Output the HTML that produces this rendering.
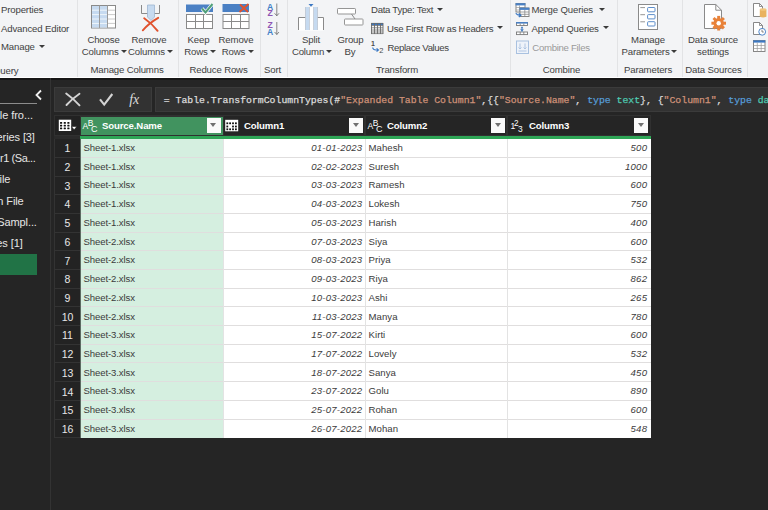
<!DOCTYPE html>
<html><head><meta charset="utf-8"><style>
html,body{margin:0;padding:0;}
body{width:768px;height:510px;overflow:hidden;position:relative;background:#252525;font-family:"Liberation Sans", sans-serif;}
.t{position:absolute;white-space:nowrap;}
</style></head><body>
<div style="position:absolute;left:0px;top:0px;width:768px;height:77px;background:#f3f4f6;"></div><div style="position:absolute;left:0px;top:77px;width:768px;height:1px;background:#ffffff;"></div><div style="position:absolute;left:0px;top:78px;width:768px;height:2px;background:#161616;"></div><div style="position:absolute;left:77px;top:0px;width:1px;height:77px;background:#e2e3e5;"></div><div style="position:absolute;left:178px;top:0px;width:1px;height:77px;background:#e2e3e5;"></div><div style="position:absolute;left:260px;top:0px;width:1px;height:77px;background:#e2e3e5;"></div><div style="position:absolute;left:287px;top:0px;width:1px;height:77px;background:#e2e3e5;"></div><div style="position:absolute;left:510px;top:0px;width:1px;height:77px;background:#e2e3e5;"></div><div style="position:absolute;left:617px;top:0px;width:1px;height:77px;background:#e2e3e5;"></div><div style="position:absolute;left:682px;top:0px;width:1px;height:77px;background:#e2e3e5;"></div><div style="position:absolute;left:747px;top:0px;width:1px;height:77px;background:#e2e3e5;"></div><div class="t" style="left:1px;top:3.03px;font-size:9.6px;line-height:14px;color:#424242;letter-spacing:-0.15px;">Properties</div><div class="t" style="left:1px;top:21.83px;font-size:9.6px;line-height:14px;color:#424242;letter-spacing:-0.15px;">Advanced Editor</div><div class="t" style="left:1px;top:40.43px;font-size:9.6px;line-height:14px;color:#424242;letter-spacing:-0.15px;">Manage</div><div style="position:absolute;left:39px;top:45px;width:0;height:0;border-left:3px solid transparent;border-right:3px solid transparent;border-top:3.2px solid #3b3b3b"></div><div class="t" style="left:-7px;top:63.63px;font-size:9.6px;line-height:14px;color:#424242;letter-spacing:-0.15px;">Query</div><div class="t" style="left:3.5px;width:200px;text-align:center;top:33.33px;font-size:9.6px;line-height:14px;color:#424242;letter-spacing:-0.15px;">Choose</div><div class="t" style="left:0.20000000000000284px;width:200px;text-align:center;top:45.33px;font-size:9.6px;line-height:14px;color:#424242;letter-spacing:-0.15px;">Columns</div><div style="position:absolute;left:121px;top:49.8px;width:0;height:0;border-left:3px solid transparent;border-right:3px solid transparent;border-top:3.2px solid #3b3b3b"></div><div class="t" style="left:49px;width:200px;text-align:center;top:33.33px;font-size:9.6px;line-height:14px;color:#424242;letter-spacing:-0.15px;">Remove</div><div class="t" style="left:46.5px;width:200px;text-align:center;top:45.33px;font-size:9.6px;line-height:14px;color:#424242;letter-spacing:-0.15px;">Columns</div><div style="position:absolute;left:167px;top:49.8px;width:0;height:0;border-left:3px solid transparent;border-right:3px solid transparent;border-top:3.2px solid #3b3b3b"></div><div class="t" style="left:27px;width:200px;text-align:center;top:63.33px;font-size:9.6px;line-height:14px;color:#424242;letter-spacing:-0.15px;">Manage Columns</div><div class="t" style="left:98.5px;width:200px;text-align:center;top:33.33px;font-size:9.6px;line-height:14px;color:#424242;letter-spacing:-0.15px;">Keep</div><div class="t" style="left:96px;width:200px;text-align:center;top:45.33px;font-size:9.6px;line-height:14px;color:#424242;letter-spacing:-0.15px;">Rows</div><div style="position:absolute;left:209.5px;top:49.8px;width:0;height:0;border-left:3px solid transparent;border-right:3px solid transparent;border-top:3.2px solid #3b3b3b"></div><div class="t" style="left:136px;width:200px;text-align:center;top:33.33px;font-size:9.6px;line-height:14px;color:#424242;letter-spacing:-0.15px;">Remove</div><div class="t" style="left:133.5px;width:200px;text-align:center;top:45.33px;font-size:9.6px;line-height:14px;color:#424242;letter-spacing:-0.15px;">Rows</div><div style="position:absolute;left:247.5px;top:49.8px;width:0;height:0;border-left:3px solid transparent;border-right:3px solid transparent;border-top:3.2px solid #3b3b3b"></div><div class="t" style="left:118.5px;width:200px;text-align:center;top:63.33px;font-size:9.6px;line-height:14px;color:#424242;letter-spacing:-0.15px;">Reduce Rows</div><div class="t" style="left:172.5px;width:200px;text-align:center;top:63.33px;font-size:9.6px;line-height:14px;color:#424242;letter-spacing:-0.15px;">Sort</div><div class="t" style="left:211px;width:200px;text-align:center;top:33.33px;font-size:9.6px;line-height:14px;color:#424242;letter-spacing:-0.15px;">Split</div><div class="t" style="left:208px;width:200px;text-align:center;top:45.33px;font-size:9.6px;line-height:14px;color:#424242;letter-spacing:-0.15px;">Column</div><div style="position:absolute;left:326px;top:49.8px;width:0;height:0;border-left:3px solid transparent;border-right:3px solid transparent;border-top:3.2px solid #3b3b3b"></div><div class="t" style="left:250.5px;width:200px;text-align:center;top:33.33px;font-size:9.6px;line-height:14px;color:#424242;letter-spacing:-0.15px;">Group</div><div class="t" style="left:250px;width:200px;text-align:center;top:45.33px;font-size:9.6px;line-height:14px;color:#424242;letter-spacing:-0.15px;">By</div><div class="t" style="left:371px;top:3.33px;font-size:9.6px;line-height:14px;color:#424242;letter-spacing:-0.28px;">Data Type: Text</div><div style="position:absolute;left:437px;top:7.8px;width:0;height:0;border-left:3px solid transparent;border-right:3px solid transparent;border-top:3.2px solid #3b3b3b"></div><div class="t" style="left:387px;top:21.63px;font-size:9.6px;line-height:14px;color:#424242;letter-spacing:-0.24px;">Use First Row as Headers</div><div style="position:absolute;left:497px;top:26px;width:0;height:0;border-left:3px solid transparent;border-right:3px solid transparent;border-top:3.2px solid #3b3b3b"></div><div class="t" style="left:387.5px;top:40.83px;font-size:9.6px;line-height:14px;color:#424242;letter-spacing:-0.38px;">Replace Values</div><div class="t" style="left:297px;width:200px;text-align:center;top:63.33px;font-size:9.6px;line-height:14px;color:#424242;letter-spacing:-0.15px;">Transform</div><div class="t" style="left:531.5px;top:3.23px;font-size:9.6px;line-height:14px;color:#424242;letter-spacing:-0.15px;">Merge Queries</div><div style="position:absolute;left:599px;top:7.8px;width:0;height:0;border-left:3px solid transparent;border-right:3px solid transparent;border-top:3.2px solid #3b3b3b"></div><div class="t" style="left:531.5px;top:21.63px;font-size:9.6px;line-height:14px;color:#424242;letter-spacing:-0.15px;">Append Queries</div><div style="position:absolute;left:603px;top:26px;width:0;height:0;border-left:3px solid transparent;border-right:3px solid transparent;border-top:3.2px solid #3b3b3b"></div><div class="t" style="left:532.3px;top:40.83px;font-size:9.6px;line-height:14px;color:#9a9a9a;letter-spacing:-0.3px;">Combine Files</div><div class="t" style="left:461.5px;width:200px;text-align:center;top:63.33px;font-size:9.6px;line-height:14px;color:#424242;letter-spacing:-0.15px;">Combine</div><div class="t" style="left:548px;width:200px;text-align:center;top:33.33px;font-size:9.6px;line-height:14px;color:#424242;letter-spacing:-0.15px;">Manage</div><div class="t" style="left:545.5px;width:200px;text-align:center;top:45.33px;font-size:9.6px;line-height:14px;color:#424242;letter-spacing:-0.15px;">Parameters</div><div style="position:absolute;left:671px;top:49.8px;width:0;height:0;border-left:3px solid transparent;border-right:3px solid transparent;border-top:3.2px solid #3b3b3b"></div><div class="t" style="left:548px;width:200px;text-align:center;top:63.33px;font-size:9.6px;line-height:14px;color:#424242;letter-spacing:-0.15px;">Parameters</div><div class="t" style="left:613px;width:200px;text-align:center;top:33.33px;font-size:9.6px;line-height:14px;color:#424242;letter-spacing:-0.15px;">Data source</div><div class="t" style="left:613px;width:200px;text-align:center;top:45.33px;font-size:9.6px;line-height:14px;color:#424242;letter-spacing:-0.15px;">settings</div><div class="t" style="left:613.5px;width:200px;text-align:center;top:63.33px;font-size:9.6px;line-height:14px;color:#424242;letter-spacing:-0.15px;">Data Sources</div><svg style="position:absolute;left:0;top:0" width="768" height="78"><rect x="91.5" y="5.5" width="24" height="22.5" fill="#fff" stroke="#8a8a8a"/><rect x="92" y="6" width="15.5" height="21.5" fill="#c6daf0"/><line x1="92" x2="107.5" y1="10.2" y2="10.2" stroke="#f4f8fc" stroke-width="0.9"/><line x1="107.5" x2="115" y1="10.2" y2="10.2" stroke="#c4c4c4" stroke-width="0.9"/><line x1="92" x2="107.5" y1="14.6" y2="14.6" stroke="#f4f8fc" stroke-width="0.9"/><line x1="107.5" x2="115" y1="14.6" y2="14.6" stroke="#c4c4c4" stroke-width="0.9"/><line x1="92" x2="107.5" y1="19" y2="19" stroke="#f4f8fc" stroke-width="0.9"/><line x1="107.5" x2="115" y1="19" y2="19" stroke="#c4c4c4" stroke-width="0.9"/><line x1="92" x2="107.5" y1="23.4" y2="23.4" stroke="#f4f8fc" stroke-width="0.9"/><line x1="107.5" x2="115" y1="23.4" y2="23.4" stroke="#c4c4c4" stroke-width="0.9"/><line x1="99.5" x2="99.5" y1="5.5" y2="28" stroke="#9a9a9a" stroke-width="1"/><line x1="107.5" x2="107.5" y1="5.5" y2="28" stroke="#9a9a9a" stroke-width="1"/><path d="M141.5 5 V13.5 H159.5 V5" fill="none" stroke="#8a8a8a"/><path d="M147.5 5 H154.5 V17 L151 20.5 L147.5 17 Z" fill="#c6daf0" stroke="#9db5d0" stroke-width="0.8"/><path d="M142.8 30.3 Q149 23 158.2 17.8 M144.2 18.2 Q152 23.5 157.6 30.8" fill="none" stroke="#e0522e" stroke-width="1.9" stroke-linecap="round"/><rect x="186" y="4.5" width="27" height="7.5" fill="#4a80c4"/><rect x="186.5" y="14.5" width="26" height="14" fill="#fff" stroke="#8a8a8a"/><line x1="186.5" x2="212.5" y1="21.5" y2="21.5" stroke="#8a8a8a"/><line x1="195.5" x2="195.5" y1="14.5" y2="28.5" stroke="#8a8a8a"/><line x1="203.5" x2="203.5" y1="14.5" y2="28.5" stroke="#8a8a8a"/><path d="M202 8.5 L205.5 12.5 L212.5 4" fill="none" stroke="#ffffff" stroke-width="3.5"/><path d="M202 8.5 L205.5 12.5 L212.5 4" fill="none" stroke="#4f9f7a" stroke-width="2"/><rect x="222.5" y="4" width="26.5" height="8" fill="#4a80c4"/><rect x="223" y="14.5" width="26" height="14" fill="#fff" stroke="#8a8a8a"/><line x1="223" x2="249" y1="21.5" y2="21.5" stroke="#8a8a8a"/><line x1="231.5" x2="231.5" y1="14.5" y2="28.5" stroke="#8a8a8a"/><line x1="240.5" x2="240.5" y1="14.5" y2="28.5" stroke="#8a8a8a"/><path d="M239.5 12 L248.5 4 M240 4.5 L248 12" fill="none" stroke="#e0522e" stroke-width="1.8"/><text x="267" y="9.8" font-family="Liberation Sans" font-size="8.6" font-weight="bold" fill="#3f7fc7">A</text><text x="267.5" y="16.4" font-family="Liberation Sans" font-size="8.6" font-weight="bold" fill="#8e54b4">Z</text><text x="267.5" y="28.2" font-family="Liberation Sans" font-size="8.6" font-weight="bold" fill="#8e54b4">Z</text><text x="267" y="34.9" font-family="Liberation Sans" font-size="8.6" font-weight="bold" fill="#3f7fc7">A</text><path d="M276.8 3.5 V15.8 M274.6 13.3 L276.8 15.8 L279 13.3" fill="none" stroke="#6a6a6a" stroke-width="0.8"/><path d="M276.8 22 V34.5 M274.6 32 L276.8 34.5 L279 32" fill="none" stroke="#6a6a6a" stroke-width="0.8"/><rect x="298.5" y="17.5" width="25" height="13" fill="#fff"/><path d="M298.5 30 V17.5 H305.5 M317.5 17.5 H323.5 V30" fill="none" stroke="#8a8a8a"/><rect x="305.5" y="7" width="4" height="23" fill="#c6daf0"/><rect x="313.5" y="7" width="4" height="23" fill="#c6daf0"/><rect x="309.5" y="7" width="4" height="23" fill="#fff"/><path d="M305.5 7 V30 M309.5 7 V30 M313.5 7 V30 M317.5 7 V30" stroke="#b0b8c4" stroke-width="0.6"/><path d="M308.5 4 H313.5 L311 6.8 Z" fill="#3b78c3"/><rect x="337.5" y="8.5" width="18" height="5.5" rx="0.7" fill="#fff" stroke="#959595"/><rect x="344.5" y="19" width="18.5" height="6" rx="0.7" fill="#fff" stroke="#959595"/><line x1="351.5" y1="14" x2="355" y2="19" stroke="#8a8a8a"/><rect x="371" y="23" width="12" height="11" fill="#fff"/><rect x="371" y="23" width="12" height="2.2" fill="#3b78c3"/><path d="M371.5 23 V34 M374.5 23 V34 M377.5 23 V34 M380.5 23 V34 M383 23 V34" stroke="#6a6a6a" stroke-width="0.9"/><path d="M371 23.4 H383 M371 25.6 H383 M371 27.8 H383 M371 30 H383 M371 32 H383 M371 33.6 H383" stroke="#6a6a6a" stroke-width="0.8"/><text x="371" y="46.3" font-family="Liberation Sans" font-size="7" font-weight="bold" fill="#4a4a4a">1</text><text x="379.3" y="53.2" font-family="Liberation Sans" font-size="7.5" fill="#4a4a4a">2</text><path d="M372.6 47.5 Q373 50 376 50 H378.3 M376.6 48.3 L378.5 50 L376.6 51.7" fill="none" stroke="#3b78c3" stroke-width="1.1"/><rect x="516" y="3.5" width="9" height="8.5" fill="#fff" stroke="#7a7a7a" stroke-width="0.9"/><rect x="515.6" y="3.2" width="9.8" height="2.2" fill="#4a80c4"/><path d="M516 7.5 H525 M516 10 H525 M519.5 5.4 V12" stroke="#9a9a9a" stroke-width="0.7"/><rect x="520" y="8" width="9" height="8.5" fill="#fff" stroke="#7a7a7a" stroke-width="0.9"/><rect x="519.6" y="7.7" width="9.8" height="2.2" fill="#4a80c4"/><path d="M520 12 H529 M520 14.3 H529 M524.8 9.9 V16.5" stroke="#8a8a8a" stroke-width="0.8"/><path d="M515.8 13.2 Q517 15.3 520.2 15.3 M518.8 13.6 L520.8 15.3 L518.8 17" fill="none" stroke="#3b78c3" stroke-width="1.3"/><rect x="516.5" y="22.5" width="11" height="3" fill="#fff" stroke="#7a7a7a" stroke-width="0.9"/><rect x="516.1" y="22" width="11.8" height="1.6" fill="#4a80c4"/><path d="M520.2 23.5 V25.5 M523.8 23.5 V25.5" stroke="#7a7a7a" stroke-width="0.8"/><rect x="516.5" y="32" width="11" height="2.6" fill="#fff" stroke="#7a7a7a" stroke-width="0.9"/><path d="M520.2 32 V34.6 M523.8 32 V34.6" stroke="#7a7a7a" stroke-width="0.8"/><path d="M522 27 V31.5" stroke="#4a80c4" stroke-width="1"/><path d="M520.2 29.3 L523.8 29.3 L522 31.8 Z M520.6 28.2 L523.4 28.2 L522 26.2 Z" fill="#4a80c4"/><rect x="516.5" y="41" width="12" height="12.5" fill="#eef3fa" stroke="#a9c1e0"/><path d="M520 43.5 V49 M518.5 47.5 L520 49 L521.5 47.5 M525 43.5 V49 M523.5 47.5 L525 49 L526.5 47.5 M518.5 51 H526.5" fill="none" stroke="#a9c1e0" stroke-width="0.9"/><rect x="638.5" y="4.5" width="19" height="25" fill="#fff" stroke="#8a8a8a"/><line x1="640.3" x2="645" y1="7.6000000000000005" y2="7.6000000000000005" stroke="#8a8a8a" stroke-width="0.9"/><rect x="647.6" y="7.5" width="7.4" height="4.3" rx="0.8" fill="#fff" stroke="#4a80c4" stroke-width="0.9"/><line x1="640.3" x2="645" y1="14.700000000000001" y2="14.700000000000001" stroke="#8a8a8a" stroke-width="0.9"/><rect x="647.6" y="14.600000000000001" width="7.4" height="4.3" rx="0.8" fill="#fff" stroke="#4a80c4" stroke-width="0.9"/><line x1="640.3" x2="645" y1="21.799999999999997" y2="21.799999999999997" stroke="#8a8a8a" stroke-width="0.9"/><rect x="647.6" y="21.7" width="7.4" height="4.3" rx="0.8" fill="#fff" stroke="#4a80c4" stroke-width="0.9"/><path d="M704.5 4.5 H715.8 L721.5 10.2 V28.5 H704.5 Z" fill="#fff" stroke="#8a8a8a"/><path d="M715.8 4.5 V10.2 H721.5" fill="none" stroke="#8a8a8a"/><g fill="#e8823a"><circle cx="718.7" cy="23.2" r="5.2"/><rect x="717.2" y="15.899999999999999" width="3" height="3.5" transform="rotate(0 718.7 23.2)"/><rect x="717.2" y="15.899999999999999" width="3" height="3.5" transform="rotate(45 718.7 23.2)"/><rect x="717.2" y="15.899999999999999" width="3" height="3.5" transform="rotate(90 718.7 23.2)"/><rect x="717.2" y="15.899999999999999" width="3" height="3.5" transform="rotate(135 718.7 23.2)"/><rect x="717.2" y="15.899999999999999" width="3" height="3.5" transform="rotate(180 718.7 23.2)"/><rect x="717.2" y="15.899999999999999" width="3" height="3.5" transform="rotate(225 718.7 23.2)"/><rect x="717.2" y="15.899999999999999" width="3" height="3.5" transform="rotate(270 718.7 23.2)"/><rect x="717.2" y="15.899999999999999" width="3" height="3.5" transform="rotate(315 718.7 23.2)"/></g><circle cx="718.7" cy="23.2" r="2.2" fill="#fff"/><path d="M753.5 3.5 H759.5 L762.5 6.5 V16.5 H753.5 Z" fill="#fff" stroke="#7a7a7a" stroke-width="0.9"/><path d="M759.5 3.5 V6.5 H762.5" fill="none" stroke="#7a7a7a" stroke-width="0.8"/><rect x="759.8" y="9.5" width="6.6" height="6.8" fill="#e9b35f"/><ellipse cx="763.1" cy="9.5" rx="3.3" ry="1.3" fill="#f2c77d"/><ellipse cx="763.1" cy="16.3" rx="3.3" ry="1.1" fill="#e9b35f"/><path d="M753.5 22.5 H759.5 L762.5 25.5 V34.5 H753.5 Z" fill="#fff" stroke="#7a7a7a" stroke-width="0.9"/><path d="M759.5 22.5 V25.5 H762.5" fill="none" stroke="#7a7a7a" stroke-width="0.8"/><circle cx="762.2" cy="31.8" r="3.4" fill="#fff" stroke="#3b78c3" stroke-width="0.9"/><path d="M762 29.8 V32 H763.8" stroke="#555" stroke-width="0.7" fill="none"/><rect x="753.5" y="40.5" width="11.5" height="11" fill="#fff" stroke="#7a7a7a" stroke-width="0.9"/><rect x="753.3" y="40.4" width="12" height="2.2" fill="#3b78c3"/><path d="M753.5 45.5 H765 M753.5 48.5 H765 M757.3 42.5 V51.5 M761.2 42.5 V51.5" stroke="#9a9a9a" stroke-width="0.7"/></svg><div style="position:absolute;left:0px;top:103px;width:37px;height:1px;background:#8c8c8c;"></div><svg style="position:absolute;left:33px;top:89px" width="12" height="12"><path d="M8 1.5 L3.5 6 L8 10.5" stroke="#f0f0f0" stroke-width="1.8" fill="none"/></svg><div class="t" style="left:-267.05px;width:300px;text-align:right;top:108.36px;font-size:11px;line-height:14px;color:#e6e6e6;letter-spacing:-0.05px;">le fro...</div><div class="t" style="left:-265.2px;width:300px;text-align:right;top:129.69px;font-size:11px;line-height:14px;color:#e6e6e6;letter-spacing:-0.1px;">eries [3]</div><div class="t" style="left:-264.68px;width:300px;text-align:right;top:151.02px;font-size:11px;line-height:14px;color:#e6e6e6;letter-spacing:-0.42px;">r1 (Sa...</div><div class="t" style="left:-289.7px;width:300px;text-align:right;top:172.35px;font-size:11px;line-height:14px;color:#e6e6e6;letter-spacing:-0.1px;">ile</div><div class="t" style="left:-276.4px;width:300px;text-align:right;top:193.68px;font-size:11px;line-height:14px;color:#e6e6e6;letter-spacing:-0.1px;">n File</div><div class="t" style="left:-263.2px;width:300px;text-align:right;top:215.01px;font-size:11px;line-height:14px;color:#e6e6e6;letter-spacing:-0.1px;">Sampl...</div><div class="t" style="left:-277.4px;width:300px;text-align:right;top:236.34px;font-size:11px;line-height:14px;color:#e6e6e6;letter-spacing:-0.1px;">es [1]</div><div style="position:absolute;left:0px;top:254px;width:37px;height:21px;background:#217346;"></div><div style="position:absolute;left:50px;top:78px;width:1px;height:432px;background:#333333;"></div><div style="position:absolute;left:54px;top:87px;width:96px;height:23px;background:#323232;border:1px solid #3b3b3b;"></div><div style="position:absolute;left:155px;top:87px;width:620px;height:23px;background:#323232;border:1px solid #3b3b3b;"></div><svg style="position:absolute;left:54px;top:87px" width="98" height="25"><path d="M12.2 6.6 Q19 11.5 25.5 18.3 M25.5 6.8 Q18.5 11.5 12.5 18" stroke="#d4d4d4" stroke-width="1.9" fill="none" stroke-linecap="round"/><path d="M46 12.3 L50.2 17.6 L58.3 7" stroke="#d4d4d4" stroke-width="2.1" fill="none"/></svg><div class="t" style="left:129.3px;top:92.37px;font-size:14px;line-height:14px;color:#dcdcdc;letter-spacing:-0.3px;"><span style="font-family:Liberation Serif;font-style:italic">fx</span></div><div class="t" style="left:163.8px;top:93px;font-family:'Liberation Mono', monospace;font-size:9.8px;line-height:16px;color:#dcdcdc;-webkit-text-stroke:0.25px;">= Table.TransformColumnTypes(#<span style="color:#ce9178">"Expanded Table Column1"</span>,{{<span style="color:#ce9178">"Source.Name"</span>, <span style="color:#569cd6">type</span> <span style="color:#4ec9b0">text</span>}, {<span style="color:#ce9178">"Column1"</span>, <span style="color:#569cd6">type</span> <span style="color:#4ec9b0">da</span></div><div style="position:absolute;left:54px;top:115px;width:597px;height:21px;background:#303030;"></div><div style="position:absolute;left:55px;top:116px;width:25px;height:19px;background:#222222;"></div><div style="position:absolute;left:81px;top:117px;width:142px;height:17.5px;background:#41935f;"></div><div style="position:absolute;left:224px;top:116px;width:140px;height:19px;background:#252525;"></div><div style="position:absolute;left:366px;top:116px;width:140px;height:19px;background:#252525;"></div><div style="position:absolute;left:508px;top:116px;width:142px;height:19px;background:#252525;"></div><div style="position:absolute;left:80px;top:136px;width:571px;height:3px;background:#2ea556;"></div><div style="position:absolute;left:54px;top:136px;width:26px;height:3px;background:#2b2b2b;"></div><div style="position:absolute;left:206.6px;top:118px;width:14px;height:14.5px;background:#fafafa;"></div><div style="position:absolute;left:210.1px;top:123.2px;width:0;height:0;border-left:3.5px solid transparent;border-right:3.5px solid transparent;border-top:4px solid #707070"></div><div style="position:absolute;left:349px;top:118px;width:14px;height:14.5px;background:#fafafa;"></div><div style="position:absolute;left:352.5px;top:123.2px;width:0;height:0;border-left:3.5px solid transparent;border-right:3.5px solid transparent;border-top:4px solid #707070"></div><div style="position:absolute;left:491px;top:118px;width:14px;height:14.5px;background:#fafafa;"></div><div style="position:absolute;left:494.5px;top:123.2px;width:0;height:0;border-left:3.5px solid transparent;border-right:3.5px solid transparent;border-top:4px solid #707070"></div><div style="position:absolute;left:634px;top:118px;width:14px;height:14.5px;background:#fafafa;"></div><div style="position:absolute;left:637.5px;top:123.2px;width:0;height:0;border-left:3.5px solid transparent;border-right:3.5px solid transparent;border-top:4px solid #707070"></div><div class="t" style="left:102px;top:118.63px;font-size:9.6px;line-height:14px;color:#ffffff;letter-spacing:-0.12px;font-weight:bold;">Source.Name</div><div class="t" style="left:244px;top:118.63px;font-size:9.6px;line-height:14px;color:#ffffff;letter-spacing:-0.12px;font-weight:bold;">Column1</div><div class="t" style="left:387px;top:118.63px;font-size:9.6px;line-height:14px;color:#ffffff;letter-spacing:-0.12px;font-weight:bold;">Column2</div><div class="t" style="left:529px;top:118.63px;font-size:9.6px;line-height:14px;color:#ffffff;letter-spacing:-0.12px;font-weight:bold;">Column3</div><svg style="position:absolute;left:82px;top:116px" width="16" height="18" font-family="Liberation Sans" fill="#fff"><text x="0.6" y="12.6" font-size="8.6">A</text><text x="5.8" y="9.5" font-size="8.4">B</text><text x="9" y="15.7" font-size="9">C</text></svg><svg style="position:absolute;left:367px;top:116px" width="16" height="18" font-family="Liberation Sans" fill="#fff"><text x="0.6" y="12.6" font-size="8.6">A</text><text x="5.8" y="9.5" font-size="8.4">B</text><text x="9" y="15.7" font-size="9">C</text></svg><svg style="position:absolute;left:508px;top:116px" width="18" height="18" font-family="Liberation Sans" fill="#fff"><text x="2.6" y="12.8" font-size="8.6">1</text><text x="6" y="9.7" font-size="8.2">2</text><text x="10" y="15.6" font-size="8.4">3</text></svg><svg style="position:absolute;left:225px;top:119px" width="15" height="14"><rect x="0.2" y="0.8" width="13" height="11.5" fill="#fff"/><g fill="#111"><rect x="1.40" y="3.40" width="1.8" height="1.8"/><rect x="4.20" y="3.40" width="1.8" height="1.8"/><rect x="7.10" y="3.40" width="1.8" height="1.8"/><rect x="10.00" y="3.40" width="1.8" height="1.8"/><rect x="1.40" y="6.60" width="1.8" height="1.8"/><rect x="7.10" y="6.60" width="1.8" height="1.8"/><rect x="10.00" y="6.60" width="1.8" height="1.8"/><rect x="1.40" y="9.40" width="1.8" height="1.8"/><rect x="4.20" y="9.40" width="1.8" height="1.8"/><rect x="7.10" y="9.40" width="1.8" height="1.8"/><rect x="10.00" y="9.40" width="1.8" height="1.8"/></g></svg><svg style="position:absolute;left:58px;top:119px" width="20" height="14"><rect x="0.8" y="0.7" width="12.4" height="11.3" fill="#fff"/><g fill="#111"><rect x="2.00" y="3.00" width="2.2" height="1.8" rx="0.5"/><rect x="5.70" y="3.00" width="2.2" height="1.8" rx="0.5"/><rect x="9.30" y="3.00" width="2.2" height="1.8" rx="0.5"/><rect x="2.00" y="5.70" width="2.2" height="1.8" rx="0.5"/><rect x="5.70" y="5.70" width="2.2" height="1.8" rx="0.5"/><rect x="9.30" y="5.70" width="2.2" height="1.8" rx="0.5"/><rect x="2.00" y="8.50" width="2.2" height="1.8" rx="0.5"/><rect x="5.70" y="8.50" width="2.2" height="1.8" rx="0.5"/><rect x="9.30" y="8.50" width="2.2" height="1.8" rx="0.5"/></g><path d="M13.5 7.5 H18.8 L16.15 10.8 Z" fill="#fff" stroke="#111" stroke-width="0.5"/></svg><div style="position:absolute;left:54px;top:139px;width:26px;height:299px;background:#333333;"></div><div style="position:absolute;left:80px;top:139px;width:143px;height:299px;background:#d5efe0;"></div><div style="position:absolute;left:80px;top:139px;width:1px;height:299px;background:#5c6b62;"></div><div style="position:absolute;left:223px;top:139px;width:428px;height:299px;background:#ffffff;"></div><div style="position:absolute;left:55px;top:139px;width:25px;height:18px;background:#232323;"></div><div class="t" style="left:-32.5px;width:200px;text-align:center;top:141.18px;font-size:10.5px;line-height:14px;color:#e8e8e8;letter-spacing:0px;">1</div><div class="t" style="left:83.5px;top:140.98px;font-size:9.6px;line-height:14px;color:#3b3b3b;letter-spacing:-0.12px;">Sheet-1.xlsx</div><div class="t" style="left:62.30000000000001px;width:300px;text-align:right;top:140.98px;font-size:9.6px;line-height:14px;color:#3b3b3b;letter-spacing:0.2px;font-style:italic;">01-01-2023</div><div class="t" style="left:368.5px;top:140.98px;font-size:9.6px;line-height:14px;color:#3b3b3b;letter-spacing:0.05px;">Mahesh</div><div class="t" style="left:347.20000000000005px;width:300px;text-align:right;top:140.98px;font-size:9.6px;line-height:14px;color:#3b3b3b;letter-spacing:0.2px;font-style:italic;">500</div><div style="position:absolute;left:81px;top:157px;width:570px;height:1px;background:#e0dede;"></div><div style="position:absolute;left:55px;top:158px;width:25px;height:18px;background:#232323;"></div><div class="t" style="left:-32.5px;width:200px;text-align:center;top:159.91px;font-size:10.5px;line-height:14px;color:#e8e8e8;letter-spacing:0px;">2</div><div class="t" style="left:83.5px;top:159.71px;font-size:9.6px;line-height:14px;color:#3b3b3b;letter-spacing:-0.12px;">Sheet-1.xlsx</div><div class="t" style="left:62.30000000000001px;width:300px;text-align:right;top:159.71px;font-size:9.6px;line-height:14px;color:#3b3b3b;letter-spacing:0.2px;font-style:italic;">02-02-2023</div><div class="t" style="left:368.5px;top:159.71px;font-size:9.6px;line-height:14px;color:#3b3b3b;letter-spacing:0.05px;">Suresh</div><div class="t" style="left:347.20000000000005px;width:300px;text-align:right;top:159.71px;font-size:9.6px;line-height:14px;color:#3b3b3b;letter-spacing:0.2px;font-style:italic;">1000</div><div style="position:absolute;left:81px;top:176px;width:570px;height:1px;background:#e0dede;"></div><div style="position:absolute;left:55px;top:177px;width:25px;height:17px;background:#232323;"></div><div class="t" style="left:-32.5px;width:200px;text-align:center;top:178.64px;font-size:10.5px;line-height:14px;color:#e8e8e8;letter-spacing:0px;">3</div><div class="t" style="left:83.5px;top:178.44px;font-size:9.6px;line-height:14px;color:#3b3b3b;letter-spacing:-0.12px;">Sheet-1.xlsx</div><div class="t" style="left:62.30000000000001px;width:300px;text-align:right;top:178.44px;font-size:9.6px;line-height:14px;color:#3b3b3b;letter-spacing:0.2px;font-style:italic;">03-03-2023</div><div class="t" style="left:368.5px;top:178.44px;font-size:9.6px;line-height:14px;color:#3b3b3b;letter-spacing:0.05px;">Ramesh</div><div class="t" style="left:347.20000000000005px;width:300px;text-align:right;top:178.44px;font-size:9.6px;line-height:14px;color:#3b3b3b;letter-spacing:0.2px;font-style:italic;">600</div><div style="position:absolute;left:81px;top:194px;width:570px;height:1px;background:#e0dede;"></div><div style="position:absolute;left:55px;top:195px;width:25px;height:18px;background:#232323;"></div><div class="t" style="left:-32.5px;width:200px;text-align:center;top:197.37px;font-size:10.5px;line-height:14px;color:#e8e8e8;letter-spacing:0px;">4</div><div class="t" style="left:83.5px;top:197.17px;font-size:9.6px;line-height:14px;color:#3b3b3b;letter-spacing:-0.12px;">Sheet-1.xlsx</div><div class="t" style="left:62.30000000000001px;width:300px;text-align:right;top:197.17px;font-size:9.6px;line-height:14px;color:#3b3b3b;letter-spacing:0.2px;font-style:italic;">04-03-2023</div><div class="t" style="left:368.5px;top:197.17px;font-size:9.6px;line-height:14px;color:#3b3b3b;letter-spacing:0.05px;">Lokesh</div><div class="t" style="left:347.20000000000005px;width:300px;text-align:right;top:197.17px;font-size:9.6px;line-height:14px;color:#3b3b3b;letter-spacing:0.2px;font-style:italic;">750</div><div style="position:absolute;left:81px;top:213px;width:570px;height:1px;background:#e0dede;"></div><div style="position:absolute;left:55px;top:214px;width:25px;height:18px;background:#232323;"></div><div class="t" style="left:-32.5px;width:200px;text-align:center;top:216.10px;font-size:10.5px;line-height:14px;color:#e8e8e8;letter-spacing:0px;">5</div><div class="t" style="left:83.5px;top:215.90px;font-size:9.6px;line-height:14px;color:#3b3b3b;letter-spacing:-0.12px;">Sheet-1.xlsx</div><div class="t" style="left:62.30000000000001px;width:300px;text-align:right;top:215.90px;font-size:9.6px;line-height:14px;color:#3b3b3b;letter-spacing:0.2px;font-style:italic;">05-03-2023</div><div class="t" style="left:368.5px;top:215.90px;font-size:9.6px;line-height:14px;color:#3b3b3b;letter-spacing:0.05px;">Harish</div><div class="t" style="left:347.20000000000005px;width:300px;text-align:right;top:215.90px;font-size:9.6px;line-height:14px;color:#3b3b3b;letter-spacing:0.2px;font-style:italic;">400</div><div style="position:absolute;left:81px;top:232px;width:570px;height:1px;background:#e0dede;"></div><div style="position:absolute;left:55px;top:233px;width:25px;height:17px;background:#232323;"></div><div class="t" style="left:-32.5px;width:200px;text-align:center;top:234.83px;font-size:10.5px;line-height:14px;color:#e8e8e8;letter-spacing:0px;">6</div><div class="t" style="left:83.5px;top:234.63px;font-size:9.6px;line-height:14px;color:#3b3b3b;letter-spacing:-0.12px;">Sheet-2.xlsx</div><div class="t" style="left:62.30000000000001px;width:300px;text-align:right;top:234.63px;font-size:9.6px;line-height:14px;color:#3b3b3b;letter-spacing:0.2px;font-style:italic;">07-03-2023</div><div class="t" style="left:368.5px;top:234.63px;font-size:9.6px;line-height:14px;color:#3b3b3b;letter-spacing:0.05px;">Siya</div><div class="t" style="left:347.20000000000005px;width:300px;text-align:right;top:234.63px;font-size:9.6px;line-height:14px;color:#3b3b3b;letter-spacing:0.2px;font-style:italic;">600</div><div style="position:absolute;left:81px;top:250px;width:570px;height:1px;background:#e0dede;"></div><div style="position:absolute;left:55px;top:251px;width:25px;height:18px;background:#232323;"></div><div class="t" style="left:-32.5px;width:200px;text-align:center;top:253.56px;font-size:10.5px;line-height:14px;color:#e8e8e8;letter-spacing:0px;">7</div><div class="t" style="left:83.5px;top:253.36px;font-size:9.6px;line-height:14px;color:#3b3b3b;letter-spacing:-0.12px;">Sheet-2.xlsx</div><div class="t" style="left:62.30000000000001px;width:300px;text-align:right;top:253.36px;font-size:9.6px;line-height:14px;color:#3b3b3b;letter-spacing:0.2px;font-style:italic;">08-03-2023</div><div class="t" style="left:368.5px;top:253.36px;font-size:9.6px;line-height:14px;color:#3b3b3b;letter-spacing:0.05px;">Priya</div><div class="t" style="left:347.20000000000005px;width:300px;text-align:right;top:253.36px;font-size:9.6px;line-height:14px;color:#3b3b3b;letter-spacing:0.2px;font-style:italic;">532</div><div style="position:absolute;left:81px;top:269px;width:570px;height:1px;background:#e0dede;"></div><div style="position:absolute;left:55px;top:270px;width:25px;height:18px;background:#232323;"></div><div class="t" style="left:-32.5px;width:200px;text-align:center;top:272.29px;font-size:10.5px;line-height:14px;color:#e8e8e8;letter-spacing:0px;">8</div><div class="t" style="left:83.5px;top:272.09px;font-size:9.6px;line-height:14px;color:#3b3b3b;letter-spacing:-0.12px;">Sheet-2.xlsx</div><div class="t" style="left:62.30000000000001px;width:300px;text-align:right;top:272.09px;font-size:9.6px;line-height:14px;color:#3b3b3b;letter-spacing:0.2px;font-style:italic;">09-03-2023</div><div class="t" style="left:368.5px;top:272.09px;font-size:9.6px;line-height:14px;color:#3b3b3b;letter-spacing:0.05px;">Riya</div><div class="t" style="left:347.20000000000005px;width:300px;text-align:right;top:272.09px;font-size:9.6px;line-height:14px;color:#3b3b3b;letter-spacing:0.2px;font-style:italic;">862</div><div style="position:absolute;left:81px;top:288px;width:570px;height:1px;background:#e0dede;"></div><div style="position:absolute;left:55px;top:289px;width:25px;height:17px;background:#232323;"></div><div class="t" style="left:-32.5px;width:200px;text-align:center;top:291.02px;font-size:10.5px;line-height:14px;color:#e8e8e8;letter-spacing:0px;">9</div><div class="t" style="left:83.5px;top:290.82px;font-size:9.6px;line-height:14px;color:#3b3b3b;letter-spacing:-0.12px;">Sheet-2.xlsx</div><div class="t" style="left:62.30000000000001px;width:300px;text-align:right;top:290.82px;font-size:9.6px;line-height:14px;color:#3b3b3b;letter-spacing:0.2px;font-style:italic;">10-03-2023</div><div class="t" style="left:368.5px;top:290.82px;font-size:9.6px;line-height:14px;color:#3b3b3b;letter-spacing:0.05px;">Ashi</div><div class="t" style="left:347.20000000000005px;width:300px;text-align:right;top:290.82px;font-size:9.6px;line-height:14px;color:#3b3b3b;letter-spacing:0.2px;font-style:italic;">265</div><div style="position:absolute;left:81px;top:306px;width:570px;height:1px;background:#e0dede;"></div><div style="position:absolute;left:55px;top:307px;width:25px;height:18px;background:#232323;"></div><div class="t" style="left:-32.5px;width:200px;text-align:center;top:309.75px;font-size:10.5px;line-height:14px;color:#e8e8e8;letter-spacing:0px;">10</div><div class="t" style="left:83.5px;top:309.55px;font-size:9.6px;line-height:14px;color:#3b3b3b;letter-spacing:-0.12px;">Sheet-2.xlsx</div><div class="t" style="left:62.30000000000001px;width:300px;text-align:right;top:309.55px;font-size:9.6px;line-height:14px;color:#3b3b3b;letter-spacing:0.2px;font-style:italic;">11-03-2023</div><div class="t" style="left:368.5px;top:309.55px;font-size:9.6px;line-height:14px;color:#3b3b3b;letter-spacing:0.05px;">Manya</div><div class="t" style="left:347.20000000000005px;width:300px;text-align:right;top:309.55px;font-size:9.6px;line-height:14px;color:#3b3b3b;letter-spacing:0.2px;font-style:italic;">780</div><div style="position:absolute;left:81px;top:325px;width:570px;height:1px;background:#e0dede;"></div><div style="position:absolute;left:55px;top:326px;width:25px;height:18px;background:#232323;"></div><div class="t" style="left:-32.5px;width:200px;text-align:center;top:328.48px;font-size:10.5px;line-height:14px;color:#e8e8e8;letter-spacing:0px;">11</div><div class="t" style="left:83.5px;top:328.28px;font-size:9.6px;line-height:14px;color:#3b3b3b;letter-spacing:-0.12px;">Sheet-3.xlsx</div><div class="t" style="left:62.30000000000001px;width:300px;text-align:right;top:328.28px;font-size:9.6px;line-height:14px;color:#3b3b3b;letter-spacing:0.2px;font-style:italic;">15-07-2022</div><div class="t" style="left:368.5px;top:328.28px;font-size:9.6px;line-height:14px;color:#3b3b3b;letter-spacing:0.05px;">Kirti</div><div class="t" style="left:347.20000000000005px;width:300px;text-align:right;top:328.28px;font-size:9.6px;line-height:14px;color:#3b3b3b;letter-spacing:0.2px;font-style:italic;">600</div><div style="position:absolute;left:81px;top:344px;width:570px;height:1px;background:#e0dede;"></div><div style="position:absolute;left:55px;top:345px;width:25px;height:17px;background:#232323;"></div><div class="t" style="left:-32.5px;width:200px;text-align:center;top:347.21px;font-size:10.5px;line-height:14px;color:#e8e8e8;letter-spacing:0px;">12</div><div class="t" style="left:83.5px;top:347.01px;font-size:9.6px;line-height:14px;color:#3b3b3b;letter-spacing:-0.12px;">Sheet-3.xlsx</div><div class="t" style="left:62.30000000000001px;width:300px;text-align:right;top:347.01px;font-size:9.6px;line-height:14px;color:#3b3b3b;letter-spacing:0.2px;font-style:italic;">17-07-2022</div><div class="t" style="left:368.5px;top:347.01px;font-size:9.6px;line-height:14px;color:#3b3b3b;letter-spacing:0.05px;">Lovely</div><div class="t" style="left:347.20000000000005px;width:300px;text-align:right;top:347.01px;font-size:9.6px;line-height:14px;color:#3b3b3b;letter-spacing:0.2px;font-style:italic;">532</div><div style="position:absolute;left:81px;top:362px;width:570px;height:1px;background:#e0dede;"></div><div style="position:absolute;left:55px;top:363px;width:25px;height:18px;background:#232323;"></div><div class="t" style="left:-32.5px;width:200px;text-align:center;top:365.94px;font-size:10.5px;line-height:14px;color:#e8e8e8;letter-spacing:0px;">13</div><div class="t" style="left:83.5px;top:365.74px;font-size:9.6px;line-height:14px;color:#3b3b3b;letter-spacing:-0.12px;">Sheet-3.xlsx</div><div class="t" style="left:62.30000000000001px;width:300px;text-align:right;top:365.74px;font-size:9.6px;line-height:14px;color:#3b3b3b;letter-spacing:0.2px;font-style:italic;">18-07-2022</div><div class="t" style="left:368.5px;top:365.74px;font-size:9.6px;line-height:14px;color:#3b3b3b;letter-spacing:0.05px;">Sanya</div><div class="t" style="left:347.20000000000005px;width:300px;text-align:right;top:365.74px;font-size:9.6px;line-height:14px;color:#3b3b3b;letter-spacing:0.2px;font-style:italic;">450</div><div style="position:absolute;left:81px;top:381px;width:570px;height:1px;background:#e0dede;"></div><div style="position:absolute;left:55px;top:382px;width:25px;height:18px;background:#232323;"></div><div class="t" style="left:-32.5px;width:200px;text-align:center;top:384.67px;font-size:10.5px;line-height:14px;color:#e8e8e8;letter-spacing:0px;">14</div><div class="t" style="left:83.5px;top:384.47px;font-size:9.6px;line-height:14px;color:#3b3b3b;letter-spacing:-0.12px;">Sheet-3.xlsx</div><div class="t" style="left:62.30000000000001px;width:300px;text-align:right;top:384.47px;font-size:9.6px;line-height:14px;color:#3b3b3b;letter-spacing:0.2px;font-style:italic;">23-07-2022</div><div class="t" style="left:368.5px;top:384.47px;font-size:9.6px;line-height:14px;color:#3b3b3b;letter-spacing:0.05px;">Golu</div><div class="t" style="left:347.20000000000005px;width:300px;text-align:right;top:384.47px;font-size:9.6px;line-height:14px;color:#3b3b3b;letter-spacing:0.2px;font-style:italic;">890</div><div style="position:absolute;left:81px;top:400px;width:570px;height:1px;background:#e0dede;"></div><div style="position:absolute;left:55px;top:401px;width:25px;height:18px;background:#232323;"></div><div class="t" style="left:-32.5px;width:200px;text-align:center;top:403.40px;font-size:10.5px;line-height:14px;color:#e8e8e8;letter-spacing:0px;">15</div><div class="t" style="left:83.5px;top:403.20px;font-size:9.6px;line-height:14px;color:#3b3b3b;letter-spacing:-0.12px;">Sheet-3.xlsx</div><div class="t" style="left:62.30000000000001px;width:300px;text-align:right;top:403.20px;font-size:9.6px;line-height:14px;color:#3b3b3b;letter-spacing:0.2px;font-style:italic;">25-07-2022</div><div class="t" style="left:368.5px;top:403.20px;font-size:9.6px;line-height:14px;color:#3b3b3b;letter-spacing:0.05px;">Rohan</div><div class="t" style="left:347.20000000000005px;width:300px;text-align:right;top:403.20px;font-size:9.6px;line-height:14px;color:#3b3b3b;letter-spacing:0.2px;font-style:italic;">600</div><div style="position:absolute;left:81px;top:419px;width:570px;height:1px;background:#e0dede;"></div><div style="position:absolute;left:55px;top:420px;width:25px;height:17px;background:#232323;"></div><div class="t" style="left:-32.5px;width:200px;text-align:center;top:422.13px;font-size:10.5px;line-height:14px;color:#e8e8e8;letter-spacing:0px;">16</div><div class="t" style="left:83.5px;top:421.93px;font-size:9.6px;line-height:14px;color:#3b3b3b;letter-spacing:-0.12px;">Sheet-3.xlsx</div><div class="t" style="left:62.30000000000001px;width:300px;text-align:right;top:421.93px;font-size:9.6px;line-height:14px;color:#3b3b3b;letter-spacing:0.2px;font-style:italic;">26-07-2022</div><div class="t" style="left:368.5px;top:421.93px;font-size:9.6px;line-height:14px;color:#3b3b3b;letter-spacing:0.05px;">Mohan</div><div class="t" style="left:347.20000000000005px;width:300px;text-align:right;top:421.93px;font-size:9.6px;line-height:14px;color:#3b3b3b;letter-spacing:0.2px;font-style:italic;">548</div><div style="position:absolute;left:223px;top:139px;width:1px;height:299px;background:#e3e3e3;"></div><div style="position:absolute;left:365px;top:139px;width:1px;height:299px;background:#e3e3e3;"></div><div style="position:absolute;left:507px;top:139px;width:1px;height:299px;background:#e3e3e3;"></div>
</body></html>
